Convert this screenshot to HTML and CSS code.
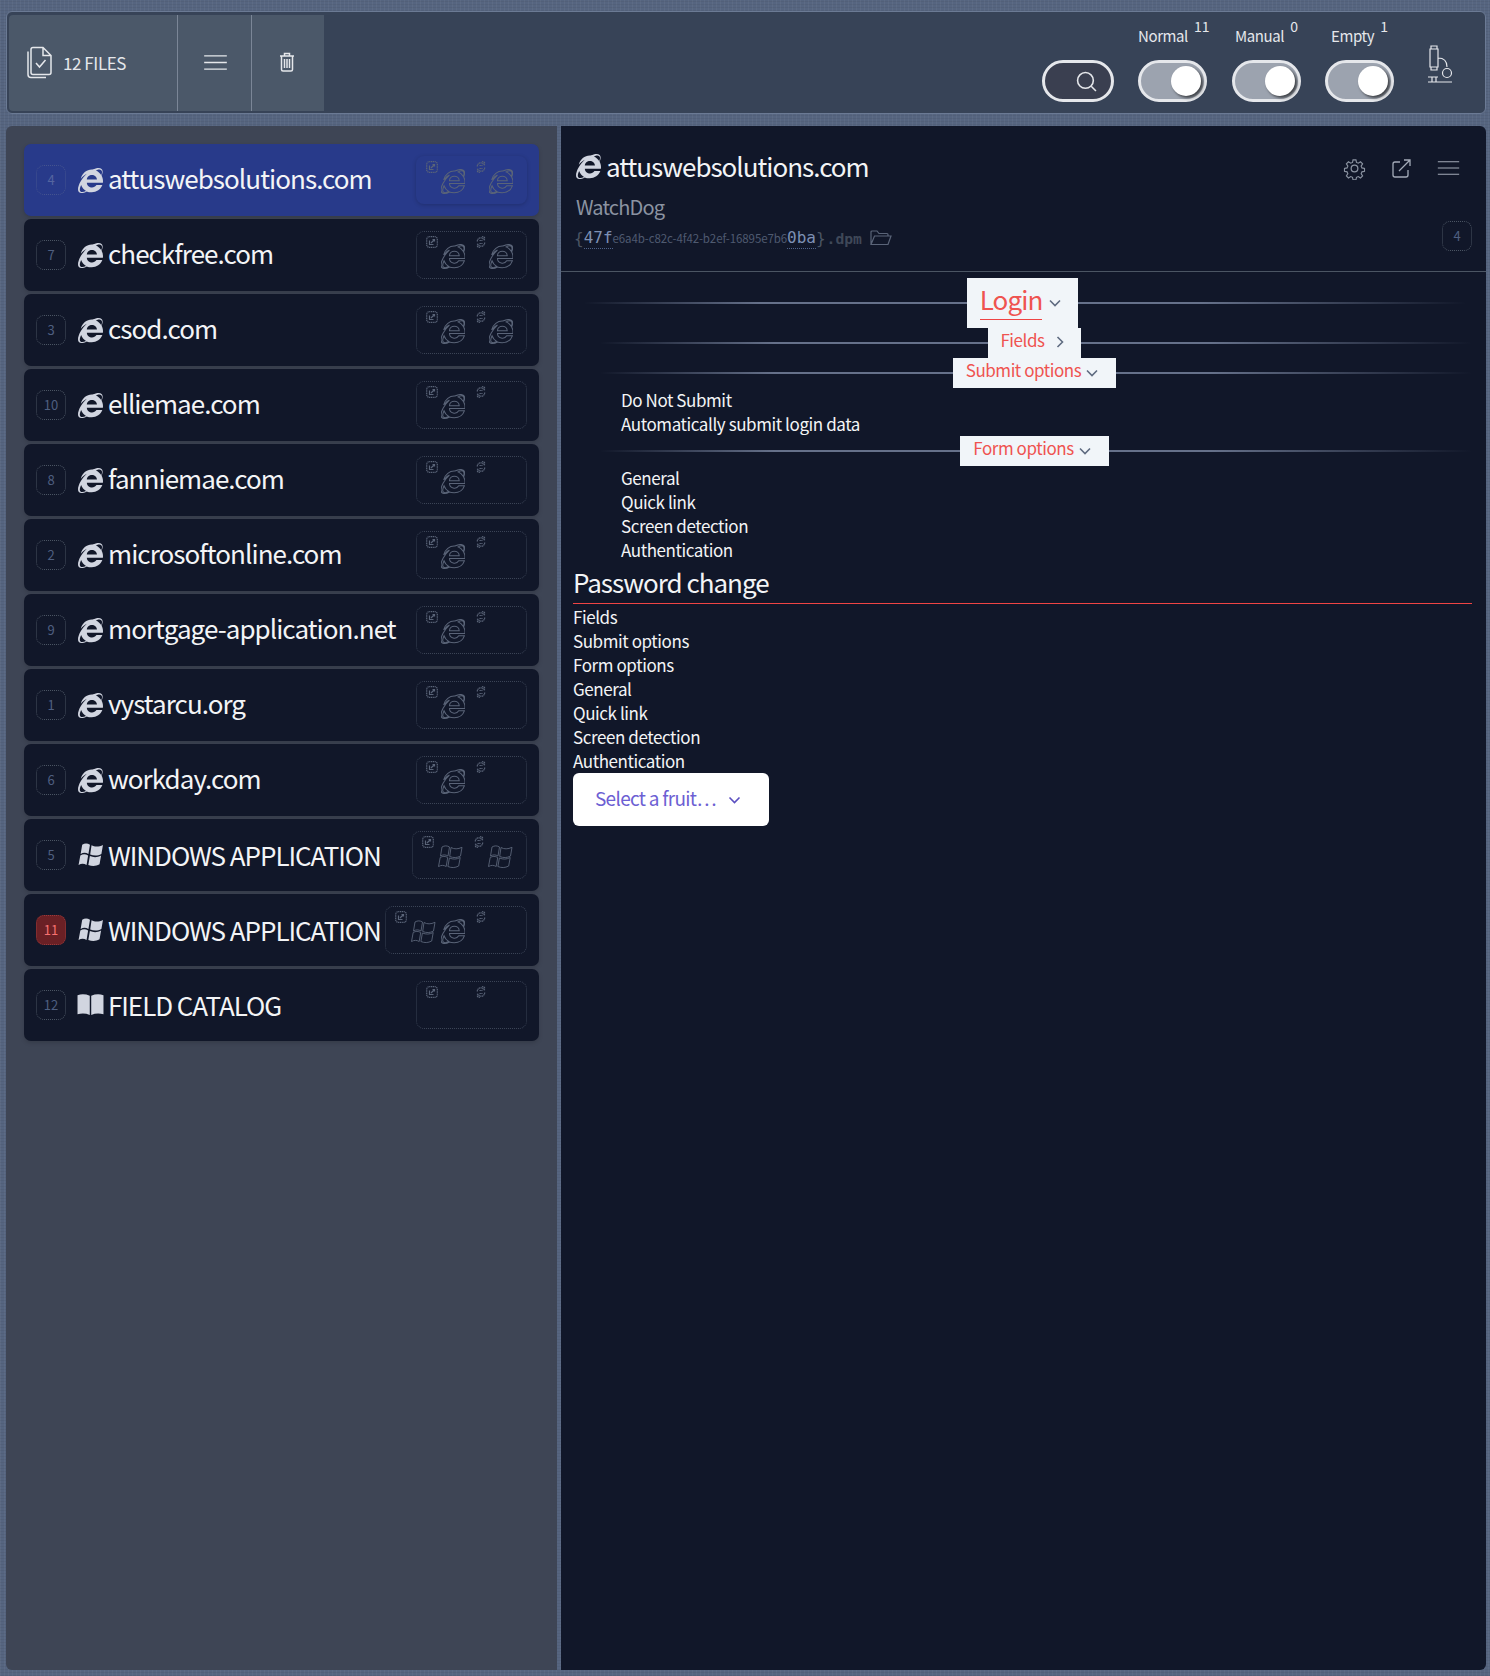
FILE: index.html
```html
<!DOCTYPE html>
<html lang="en">
<head>
  <meta charset="UTF-8" />
  <title>Files</title>
  <link rel="stylesheet" href="styles.css">
</head>
<body>
  <svg class="defs" width="0" height="0">
    <symbol id="ie" viewBox="0 0 512 512"><path d="M483.049 159.706c10.855-24.575 21.424-60.438 21.424-87.871 0-72.722-79.641-98.371-209.673-38.577-107.632-7.181-211.221 73.67-237.098 186.457 30.852-34.862 78.271-82.298 121.977-101.158C125.404 166.85 79.128 228.002 43.992 291.725 23.246 329.651 0 390.94 0 436.747c0 98.575 92.854 86.5 180.251 42.006 31.423 15.43 66.559 15.573 101.695 15.573 97.124 0 184.249-54.294 216.814-146.022H377.927c-52.509 88.593-196.819 52.996-196.819-47.436H509.9c6.407-43.581-1.655-95.715-26.851-141.162zM64.559 346.877c17.711 51.15 53.703 95.871 100.266 123.304-88.741 48.94-173.267 29.096-100.266-123.304zm115.977-108.873c2-55.151 50.276-94.871 103.98-94.871 53.418 0 101.981 39.72 103.981 94.871H180.536zm184.536-187.6c21.425-10.287 48.563-22.003 72.558-22.003 31.422 0 54.274 21.717 54.274 53.722 0 20.003-7.427 49.007-14.569 67.867-26.28-42.292-65.986-81.584-112.263-99.586z"/></symbol>
    <symbol id="win" viewBox="0 0 26 24"><path d="M5 2.500C7.500 1 10 1 12.500 2.500L11 11.500C8.500 10 6 10 3.500 11.500zM14 3C17 4.800 21 4.800 25 2.800L23.500 11.500C20 13.500 16.500 13.500 12.700 12zM3.200 13C5.700 11.500 8.200 11.500 10.700 13L9.200 22C6.700 20.500 4.200 20.500 1.500 22zM12.400 13.500C16 15 19.500 15 23.200 13L21.700 21.500C18 23.500 14.500 23.500 10.900 22z"/></symbol>
    <symbol id="book" viewBox="0 0 26 24"><path d="M.5 3C4.500 1.800 8.500 2 12.300 3.600V22C8.500 20.400 4.500 20.200.5 21.400zM25.500 3C21.500 1.800 17.500 2 13.700 3.600V22C17.500 20.400 21.500 20.200 25.500 21.400z"/></symbol>
    <symbol id="ext" viewBox="0 0 12 12"><rect x=".7" y=".7" width="10.600" height="10.600" rx="2.500" stroke-dasharray="1.200 .6"/><path d="M3.500 4.500v4h4M5 7l3.500-3.500M6.500 3.500h2v2"/></symbol>
    <symbol id="sync" viewBox="0 0 12 12"><path d="M2.300 5.500C2.300 2.500 5 1 7.500 2.200L9.500 4M9.700 6.500C9.700 9.500 7 11 4.500 9.800L2.500 8M7 .5l2.500 1v3M5 11.500l-2.500-1v-3M4.500 4.500h3M4.500 7.500h3" stroke-dasharray="1.400 .4"/></symbol>
    <symbol id="bars" viewBox="0 0 24 18"><path d="M0 2h24M0 9h24M0 16h24"/></symbol>
    <symbol id="down" viewBox="0 0 12 8"><path d="M1 1.500l5 5 5-5"/></symbol>
  </svg>

  <header class="topbar">
    <div class="actions">
      <div class="action files">
        <svg class="stroke-icon" width="27" height="33" viewBox="0 0 27 33"><path d="M6 3.500a2 2 0 0 1 2-2h10l8 8v17a2 2 0 0 1-2 2H8a2 2 0 0 1-2-2zM18 1.500v8h8M3 5.500v23a3 3 0 0 0 3 3h15M11 17l3.500 4 6-7"/></svg>
        <span>12 FILES</span>
      </div>
      <div class="action menu"><svg class="stroke-icon" width="23" height="17"><use href="#bars"/></svg></div>
      <div class="action trash">
        <svg class="stroke-icon" width="16" height="20" viewBox="0 0 16 20"><path d="M1 4h14M5.500 4V1.500h5V4M2.500 4v13.500a1.500 1.500 0 0 0 1.500 1.500h8a1.500 1.500 0 0 0 1.500-1.500V4M5.500 7v9M8 7v9M10.500 7v9"/></svg>
      </div>
    </div>
    <div class="filters">
      <div class="filter search-filter">
        <div class="pill search"><svg class="stroke-icon" width="21" height="21" viewBox="0 0 20 20"><circle cx="9" cy="9" r="7.500"/><path d="M14.500 14.500l4.500 4.500"/></svg></div>
      </div>
      <div class="filter">
        <div class="filter-label">Normal<sup>11</sup></div>
        <div class="pill toggle"><span class="knob"></span></div>
      </div>
      <div class="filter">
        <div class="filter-label">Manual<sup>0</sup></div>
        <div class="pill toggle"><span class="knob"></span></div>
      </div>
      <div class="filter">
        <div class="filter-label">Empty<sup>1</sup></div>
        <div class="pill toggle"><span class="knob"></span></div>
      </div>
      <svg class="stroke-icon microscope" width="26" height="38" viewBox="0 0 26 38"><path d="M3 4h8v18H3zM4 1h6v3H4zM4 22h6v3H4zM11 13c6 0 9 3 9 9M1 37h24M5 37v-5M9 37v-5M1 32h10"/><circle cx="20" cy="28" r="4.500"/></svg>
    </div>
  </header>

  <main class="columns">
    <section class="file-list">
      <article class="file-row selected">
        <span class="badge">4</span>
        <svg class="os-icon"><use href="#ie"/></svg>
        <span class="file-name">attuswebsolutions.com</span>
        <div class="ghost">
          <svg class="tiny"><use href="#ext"/></svg>
          <div class="slot"><svg class="ghost-icon"><use href="#ie"/></svg></div>
          <svg class="tiny"><use href="#sync"/></svg>
          <div class="slot"><svg class="ghost-icon"><use href="#ie"/></svg></div>
        </div>
      </article>
      <article class="file-row">
        <span class="badge">7</span>
        <svg class="os-icon"><use href="#ie"/></svg>
        <span class="file-name">checkfree.com</span>
        <div class="ghost">
          <svg class="tiny"><use href="#ext"/></svg>
          <div class="slot"><svg class="ghost-icon"><use href="#ie"/></svg></div>
          <svg class="tiny"><use href="#sync"/></svg>
          <div class="slot"><svg class="ghost-icon"><use href="#ie"/></svg></div>
        </div>
      </article>
      <article class="file-row">
        <span class="badge">3</span>
        <svg class="os-icon"><use href="#ie"/></svg>
        <span class="file-name">csod.com</span>
        <div class="ghost">
          <svg class="tiny"><use href="#ext"/></svg>
          <div class="slot"><svg class="ghost-icon"><use href="#ie"/></svg></div>
          <svg class="tiny"><use href="#sync"/></svg>
          <div class="slot"><svg class="ghost-icon"><use href="#ie"/></svg></div>
        </div>
      </article>
      <article class="file-row">
        <span class="badge">10</span>
        <svg class="os-icon"><use href="#ie"/></svg>
        <span class="file-name">elliemae.com</span>
        <div class="ghost">
          <svg class="tiny"><use href="#ext"/></svg>
          <div class="slot"><svg class="ghost-icon"><use href="#ie"/></svg></div>
          <svg class="tiny"><use href="#sync"/></svg>
          <div class="slot"></div>
        </div>
      </article>
      <article class="file-row">
        <span class="badge">8</span>
        <svg class="os-icon"><use href="#ie"/></svg>
        <span class="file-name">fanniemae.com</span>
        <div class="ghost">
          <svg class="tiny"><use href="#ext"/></svg>
          <div class="slot"><svg class="ghost-icon"><use href="#ie"/></svg></div>
          <svg class="tiny"><use href="#sync"/></svg>
          <div class="slot"></div>
        </div>
      </article>
      <article class="file-row">
        <span class="badge">2</span>
        <svg class="os-icon"><use href="#ie"/></svg>
        <span class="file-name">microsoftonline.com</span>
        <div class="ghost">
          <svg class="tiny"><use href="#ext"/></svg>
          <div class="slot"><svg class="ghost-icon"><use href="#ie"/></svg></div>
          <svg class="tiny"><use href="#sync"/></svg>
          <div class="slot"></div>
        </div>
      </article>
      <article class="file-row">
        <span class="badge">9</span>
        <svg class="os-icon"><use href="#ie"/></svg>
        <span class="file-name">mortgage-application.net</span>
        <div class="ghost">
          <svg class="tiny"><use href="#ext"/></svg>
          <div class="slot"><svg class="ghost-icon"><use href="#ie"/></svg></div>
          <svg class="tiny"><use href="#sync"/></svg>
          <div class="slot"></div>
        </div>
      </article>
      <article class="file-row">
        <span class="badge">1</span>
        <svg class="os-icon"><use href="#ie"/></svg>
        <span class="file-name">vystarcu.org</span>
        <div class="ghost">
          <svg class="tiny"><use href="#ext"/></svg>
          <div class="slot"><svg class="ghost-icon"><use href="#ie"/></svg></div>
          <svg class="tiny"><use href="#sync"/></svg>
          <div class="slot"></div>
        </div>
      </article>
      <article class="file-row">
        <span class="badge">6</span>
        <svg class="os-icon"><use href="#ie"/></svg>
        <span class="file-name">workday.com</span>
        <div class="ghost">
          <svg class="tiny"><use href="#ext"/></svg>
          <div class="slot"><svg class="ghost-icon"><use href="#ie"/></svg></div>
          <svg class="tiny"><use href="#sync"/></svg>
          <div class="slot"></div>
        </div>
      </article>
      <article class="file-row">
        <span class="badge">5</span>
        <svg class="os-icon wide"><use href="#win"/></svg>
        <span class="file-name">WINDOWS APPLICATION</span>
        <div class="ghost">
          <svg class="tiny"><use href="#ext"/></svg>
          <div class="slot"><svg class="ghost-icon win"><use href="#win"/></svg></div>
          <svg class="tiny"><use href="#sync"/></svg>
          <div class="slot"><svg class="ghost-icon win"><use href="#win"/></svg></div>
        </div>
      </article>
      <article class="file-row">
        <span class="badge alert">11</span>
        <svg class="os-icon wide"><use href="#win"/></svg>
        <span class="file-name">WINDOWS APPLICATION</span>
        <div class="ghost">
          <svg class="tiny"><use href="#ext"/></svg>
          <div class="slot"><svg class="ghost-icon win"><use href="#win"/></svg><svg class="ghost-icon"><use href="#ie"/></svg></div>
          <svg class="tiny"><use href="#sync"/></svg>
          <div class="slot"></div>
        </div>
      </article>
      <article class="file-row">
        <span class="badge">12</span>
        <svg class="os-icon wide"><use href="#book"/></svg>
        <span class="file-name">FIELD CATALOG</span>
        <div class="ghost">
          <svg class="tiny"><use href="#ext"/></svg>
          <div class="slot"></div>
          <svg class="tiny"><use href="#sync"/></svg>
          <div class="slot"></div>
        </div>
      </article>
    </section>

    <section class="detail">
      <div class="detail-head">
        <div class="detail-info">
          <h1 class="detail-title"><svg class="os-icon"><use href="#ie"/></svg>attuswebsolutions.com</h1>
          <div class="detail-sub">WatchDog</div>
          <div class="hash">
            <span class="brace">{</span><span class="hash-key">47f</span><span class="hash-mid">e6a4b-c82c-4f42-b2ef-16895e7b6</span><span class="hash-key">0ba</span><span class="brace">}</span><span class="hash-ext">.dpm</span>
            <svg class="folder" width="22" height="16" viewBox="0 0 22 16"><path d="M1 14.500V2a1 1 0 0 1 1-1h5l2 2.500h8a1 1 0 0 1 1 1V6M1 14.500L4.500 6H21l-3 8.500z"/></svg>
          </div>
        </div>
        <div class="detail-tools">
          <div class="tool-icons">
            <svg class="tool-icon" width="23" height="23" viewBox="0 0 24 24"><path d="M10.300 2h3.400l.6 3 2.100.9 2.600-1.700 2.400 2.400-1.700 2.600.9 2.100 3 .6v3.400l-3 .6-.9 2.100 1.700 2.600-2.400 2.400-2.600-1.700-2.100.9-.6 3h-3.400l-.6-3-2.100-.9-2.600 1.700-2.400-2.400 1.700-2.600-.9-2.100-3-.6v-3.400l3-.6.9-2.100-1.700-2.600 2.400-2.400 2.600 1.700 2.100-.9z" transform="translate(1.200 1.200) scale(.9)"/><circle cx="12" cy="12" r="3.500"/></svg>
            <svg class="tool-icon" width="19" height="19" viewBox="0 0 19 19"><path d="M8 3H3a2 2 0 0 0-2 2v11a2 2 0 0 0 2 2h11a2 2 0 0 0 2-2v-5M7 12L18 1M12 1h6v6"/></svg>
            <svg class="tool-icon" width="23" height="16"><use href="#bars"/></svg>
          </div>
          <span class="badge">4</span>
        </div>
      </div>

      <div class="login-group">
        <div class="divider top">
          <button class="tab big"><span class="tab-active">Login</span><svg class="chev" width="12" height="8"><use href="#down"/></svg></button>
        </div>
        <div class="divider shift fields-tab">
          <button class="tab">Fields<svg class="chev right" width="8" height="12" viewBox="0 0 8 12"><path d="M1.500 1l5 5-5 5"/></svg></button>
        </div>
        <div class="divider shift">
          <button class="tab submit">Submit options<svg class="chev" width="12" height="8"><use href="#down"/></svg></button>
        </div>
        <ul class="plain-list nested">
          <li>Do Not Submit</li>
          <li>Automatically submit login data</li>
        </ul>
        <div class="divider shift">
          <button class="tab form">Form options<svg class="chev" width="12" height="8"><use href="#down"/></svg></button>
        </div>
        <ul class="plain-list nested">
          <li>General</li>
          <li>Quick link</li>
          <li>Screen detection</li>
          <li>Authentication</li>
        </ul>
      </div>

      <h2 class="section-title">Password change</h2>
      <ul class="plain-list">
        <li>Fields</li>
        <li>Submit options</li>
        <li>Form options</li>
        <li>General</li>
        <li>Quick link</li>
        <li>Screen detection</li>
        <li>Authentication</li>
      </ul>
      <button class="fruit">Select a fruit…<svg class="chev" width="13" height="8" viewBox="0 0 12 8"><path d="M1 1.500l5 5 5-5"/></svg></button>
    </section>
  </main>
</body>
</html>
```

FILE: styles.css
```css
* {
  box-sizing: border-box;
}
body {
  margin: 0;
  height: 1676px;
  padding: 11px 4px 6px 6px;
  font-family: "Noto Sans CJK JP", "Noto Sans", sans-serif;
  color: #f3f4f6;
  background-color: #566580;
  background-image:
    repeating-linear-gradient(90deg, rgba(255,255,255,.04) 0 1px, transparent 1px 4px),
    repeating-linear-gradient(0deg, rgba(0,0,0,.05) 0 1px, transparent 1px 3px);
  overflow: hidden;
}
.defs {
  display: none;
}
.topbar {
  display: flex;
  justify-content: space-between;
  height: 103px;
  padding: 3px 2px 2px;
  background-color: #374357;
  border: 1px solid #6b7a94;
  border-radius: 6px;
}
.actions {
  display: flex;
  height: 96px;
}
.action {
  display: flex;
  align-items: center;
  justify-content: center;
  padding-bottom: 2px;
  background-color: #4b5869;
  border-left: 1px solid #7b8697;
  color: #e5e7eb;
}
.action.files {
  width: 168px;
  gap: 11px;
  padding-right: 35px;
  border-left: 0;
  border-radius: 4px 0 0 4px;
  font-size: 17px;
  letter-spacing: -.4px;
}
.action.menu {
  width: 74px;
  padding-left: 2px;
}
.action.trash {
  width: 73px;
  padding-right: 3px;
}
.stroke-icon {
  fill: none;
  stroke: #e5e7eb;
  stroke-width: 1.500;
}
.filters {
  display: flex;
  align-items: flex-end;
  padding: 0 30px 9px 0;
}
.filter {
  width: 69px;
  margin-left: 24px;
}
.filter:nth-child(3) {
  margin-left: 25px;
}
.filter-label {
  height: 37px;
  font-size: 15px;
  letter-spacing: -.4px;
  line-height: 26px;
  white-space: nowrap;
  text-align: center;
  color: #e5e7eb;
}
.filter-label sup {
  position: relative;
  top: -10px;
  margin-left: 6px;
  font-size: 14px;
  line-height: 0;
  letter-spacing: 0;
  vertical-align: baseline;
}
.search-filter {
  width: 72px;
  margin-left: 0;
}
.pill {
  height: 42px;
  border: 3px solid #e5e7eb;
  border-radius: 21px;
  display: flex;
  align-items: center;
}
.search {
  width: 72px;
  justify-content: flex-end;
  padding-right: 14px;
  background-color: #3a3f50;
}
.toggle {
  justify-content: flex-end;
  padding-right: 3px;
  background-color: #9ca3af;
}
.knob {
  width: 30px;
  height: 30px;
  border-radius: 50%;
  background-color: #fff;
  box-shadow: 2px 2px 3px rgba(0,0,0,.6);
}
.microscope {
  margin: 0 0 19px 33px;
  stroke-width: 1.200;
}
.columns {
  display: flex;
  gap: 4px;
  height: 1544px;
  margin-top: 12px;
}
.file-list {
  width: 551px;
  padding: 18px 18px 0;
  background-color: #3e4555;
  border-radius: 6px 0 0 6px;
}
.file-row {
  display: flex;
  align-items: center;
  height: 72px;
  margin-bottom: 3px;
  padding: 0 12px;
  background-color: #111729;
  border-radius: 7px;
  box-shadow: 0 2px 4px rgba(0,0,0,.15);
}
.file-row.selected {
  background-color: #283a8a;
}
.badge {
  flex: none;
  display: flex;
  align-items: center;
  justify-content: center;
  width: 30px;
  height: 30px;
  padding-bottom: 2px;
  border: 1px dotted #4b5563;
  border-radius: 8px;
  font-size: 13px;
  color: #4f5f80;
}
.selected .badge {
  color: #5565a0;
  border-color: #45548f;
}
.badge.alert {
  background-color: #6a2025;
  color: #f87171;
  border-color: #9b3a3a;
}
.os-icon {
  flex: none;
  width: 25px;
  height: 25px;
  margin-left: 12px;
  fill: #d1d5e0;
}
.os-icon.wide {
  width: 27px;
  margin: -2px -1px 0 11px;
}
.file-name {
  margin-left: 5px;
  padding-bottom: 4px;
  font-size: 26px;
  letter-spacing: -.95px;
  line-height: 40px;
  white-space: nowrap;
}
.wide + .file-name {
  padding-bottom: 0;
  letter-spacing: -1.050px;
}
.ghost {
  display: flex;
  align-items: flex-start;
  flex: none;
  height: 48px;
  margin-left: auto;
  padding: 4px 13px 0 9px;
  border: 1px dotted #3b4456;
  border-radius: 8px;
}
.selected .ghost {
  border: 0;
  padding: 5px 14px 0 10px;
  box-shadow: 0 1px 4px rgba(0,0,0,.2);
}
.tiny {
  flex: none;
  width: 12px;
  height: 12px;
  fill: none;
  stroke: #5a6478;
  stroke-width: 1.200;
}
.slot {
  display: flex;
  gap: 5px;
  min-width: 24px;
  margin: 8px 10px 0 3px;
}
.slot:last-child {
  margin-right: 0;
  margin-left: 2px;
}
.ghost-icon {
  width: 24px;
  height: 25px;
  fill: none;
  stroke: #5a6478;
  stroke-width: 22px;
}
.ghost-icon.win {
  width: 26px;
  stroke-width: .9px;
}
.detail {
  flex: 1;
  padding: 0 14px 0 12px;
  background-color: #111729;
  border-radius: 0 6px 6px 0;
}
.detail-head {
  display: flex;
  justify-content: space-between;
  height: 146px;
  margin: 0 -14px 0 -12px;
  padding: 20px 14px 0 15px;
  border-bottom: 1px solid #4b5563;
}
.detail-title {
  display: flex;
  align-items: center;
  margin: 0;
  font-size: 26px;
  font-weight: 400;
  letter-spacing: -1px;
  line-height: 40px;
}
.detail-title .os-icon {
  margin: 0 5px 0 0;
}
.detail-sub {
  margin-top: 7px;
  font-size: 20px;
  letter-spacing: -.85px;
  line-height: 28px;
  color: #8b93a1;
}
.hash {
  display: flex;
  align-items: center;
  height: 24px;
  margin: 5px 0 0 -2px;
  font-family: "DejaVu Sans Mono", monospace;
  font-size: 16px;
}
.brace {
  color: #4b5563;
}
.hash-key {
  padding-bottom: 1px;
  border-bottom: 1px dotted #4f6288;
  color: #7d90b4;
}
.hash-mid {
  font-family: "Noto Sans CJK JP", sans-serif;
  font-size: 11.500px;
  letter-spacing: -.1px;
  color: #4f5a70;
}
.hash-ext {
  margin-left: 1px;
  font-size: 14.700px;
  font-weight: 700;
  color: #3f4858;
}
.folder {
  margin-left: 8px;
  fill: none;
  stroke: #5a6478;
  stroke-width: 1.200;
}
.detail-tools {
  display: flex;
  flex-direction: column;
  align-items: flex-end;
  gap: 33px;
}
.tool-icons {
  display: flex;
  align-items: center;
  gap: 26px;
  height: 40px;
  margin-top: 2px;
  padding-right: 12px;
}
.tool-icon {
  fill: none;
  stroke: #8b93a1;
  stroke-width: 1.300;
}
.tool-icon + .tool-icon {
  stroke: #a4abb8;
}
.login-group {
  margin-top: 6px;
}
.divider {
  display: flex;
  justify-content: center;
  align-items: flex-start;
  margin: 0 0 0 11px;
  background: linear-gradient(90deg, transparent, #66718a 20%, #66718a 70%, transparent) center / 100% 2px no-repeat;
}
.divider.top {
  height: 50px;
  margin-right: 6px;
  padding-right: 5px;
}
.divider.shift {
  height: 30px;
  margin-left: 27px;
  padding-right: 4px;
}
.divider.fields-tab {
  height: 30px;
  background-position: center 14px;
}
.tab {
  display: flex;
  align-items: center;
  justify-content: center;
  flex: none;
  width: 93px;
  height: 30px;
  margin: 0;
  padding: 0 4px 7px 0;
  border: 0;
  background-color: #f1f5f9;
  font: inherit;
  font-size: 17px;
  letter-spacing: -.45px;
  color: #ef5350;
}
.tab .chev {
  margin-top: 7px;
}
.fields-tab .tab {
  height: 33px;
  padding-bottom: 11px;
}
.fields-tab .tab .chev {
  margin-top: 5px;
}
.tab.big {
  width: 111px;
  height: 50px;
  padding-bottom: 7px;
  font-size: 26px;
  letter-spacing: -.9px;
}
.tab.submit {
  width: 163px;
}
.tab.form {
  width: 149px;
}
.tab-active {
  padding-bottom: 2px;
  border-bottom: 1px solid #ef4444;
}
.chev {
  flex: none;
  margin: 5px 0 0 5px;
  fill: none;
  stroke: #5f6b80;
  stroke-width: 1.600;
}
.big .chev {
  margin-left: 7px;
}
.chev.right {
  margin-left: 11px;
}
.plain-list {
  margin: 0;
  padding: 0;
  list-style: none;
  font-size: 17px;
  letter-spacing: -.42px;
}
.plain-list li {
  height: 24px;
  line-height: 23px;
}
.plain-list.nested {
  padding-left: 48px;
}
.section-title {
  height: 42px;
  margin: 0 0 1px;
  border-bottom: 1px solid #ef4444;
  font-size: 26px;
  font-weight: 400;
  letter-spacing: -1px;
  line-height: 40px;
}
.fruit {
  display: flex;
  align-items: center;
  width: 196px;
  height: 53px;
  padding: 0 22px 4px;
  border: 0;
  border-radius: 6px;
  background-color: #fff;
  font: inherit;
  font-size: 19px;
  letter-spacing: -.7px;
  color: #6d5fd3;
  white-space: nowrap;
}
.fruit .chev {
  margin: 4px 0 0 12px;
  stroke: #5b4fc0;
}
```
